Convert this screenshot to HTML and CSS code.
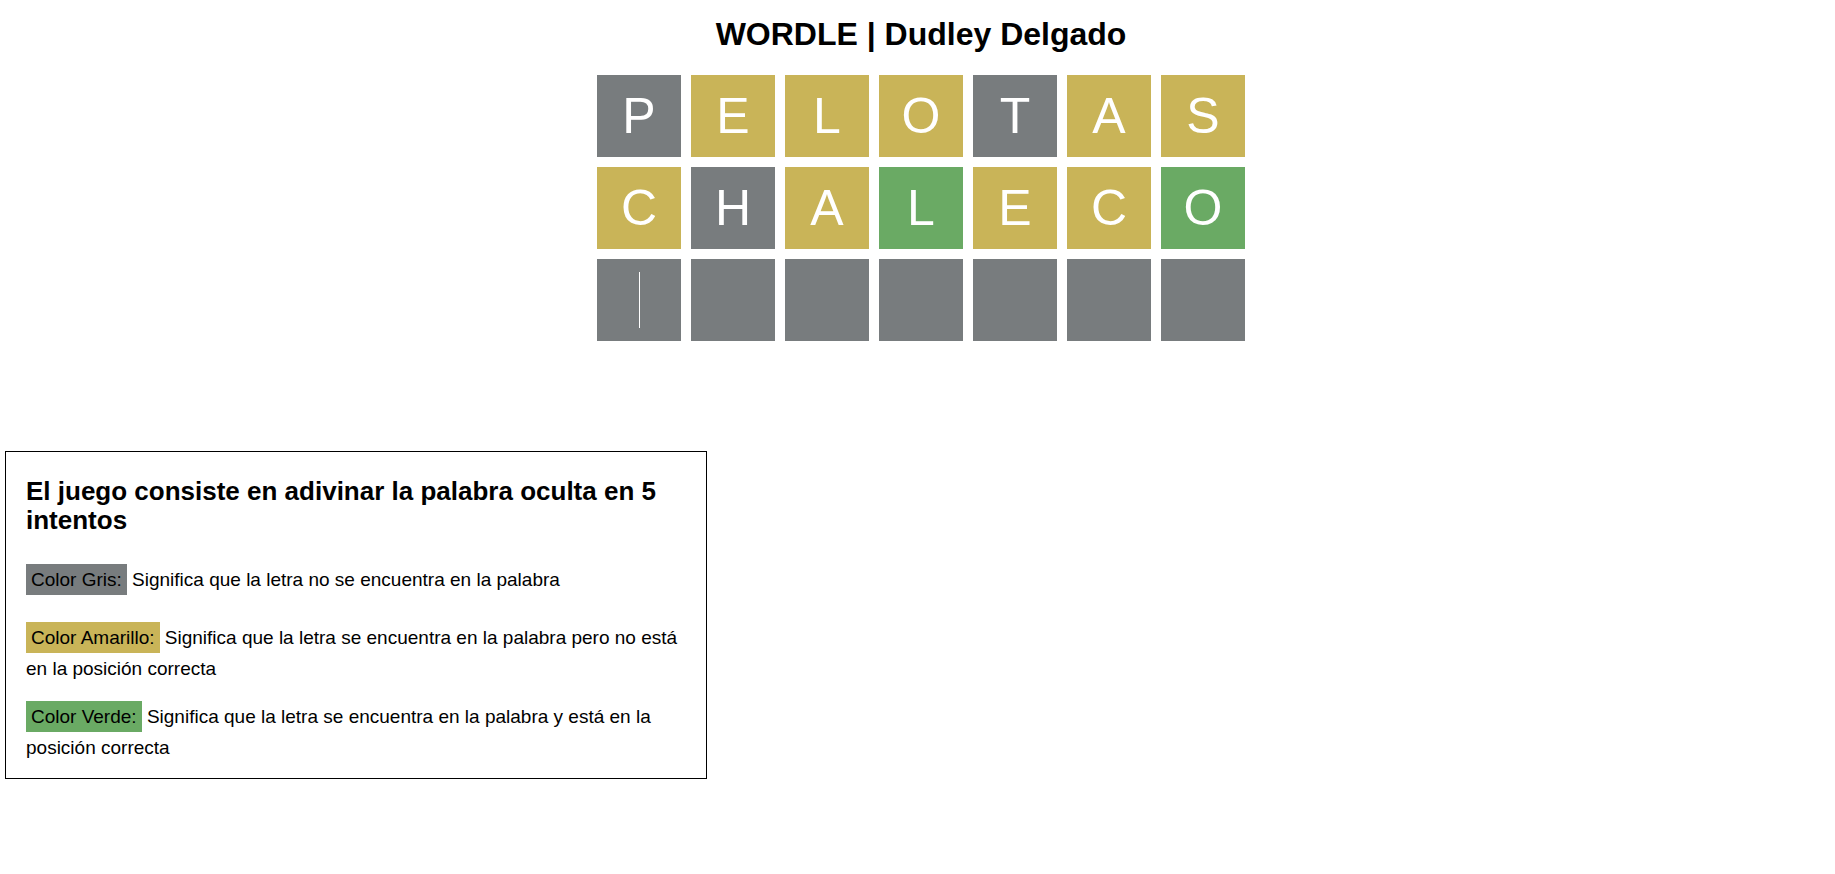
FILE: index.html
```html
<!DOCTYPE html>
<html lang="es">
<head>
<meta charset="utf-8">
<meta name="viewport" content="width=device-width, initial-scale=1">
<title>WORDLE | Dudley Delgado</title>
<link rel="stylesheet" href="styles.css">
</head>
<body>
<main class="game">
  <h1 class="title">WORDLE | Dudley Delgado</h1>
  <form class="board">
    <div class="row">
      <input class="tile" type="text" maxlength="1" aria-label="Intento 1, letra 1" value="P">
      <input class="tile present" type="text" maxlength="1" aria-label="Intento 1, letra 2" value="E">
      <input class="tile present" type="text" maxlength="1" aria-label="Intento 1, letra 3" value="L">
      <input class="tile present" type="text" maxlength="1" aria-label="Intento 1, letra 4" value="O">
      <input class="tile" type="text" maxlength="1" aria-label="Intento 1, letra 5" value="T">
      <input class="tile present" type="text" maxlength="1" aria-label="Intento 1, letra 6" value="A">
      <input class="tile present" type="text" maxlength="1" aria-label="Intento 1, letra 7" value="S">
    </div>
    <div class="row">
      <input class="tile present" type="text" maxlength="1" aria-label="Intento 2, letra 1" value="C">
      <input class="tile" type="text" maxlength="1" aria-label="Intento 2, letra 2" value="H">
      <input class="tile present" type="text" maxlength="1" aria-label="Intento 2, letra 3" value="A">
      <input class="tile correct" type="text" maxlength="1" aria-label="Intento 2, letra 4" value="L">
      <input class="tile present" type="text" maxlength="1" aria-label="Intento 2, letra 5" value="E">
      <input class="tile present" type="text" maxlength="1" aria-label="Intento 2, letra 6" value="C">
      <input class="tile correct" type="text" maxlength="1" aria-label="Intento 2, letra 7" value="O">
    </div>
    <div class="row">
      <input class="tile active" type="text" maxlength="1" aria-label="Intento 3, letra 1">
      <input class="tile" type="text" maxlength="1" aria-label="Intento 3, letra 2">
      <input class="tile" type="text" maxlength="1" aria-label="Intento 3, letra 3">
      <input class="tile" type="text" maxlength="1" aria-label="Intento 3, letra 4">
      <input class="tile" type="text" maxlength="1" aria-label="Intento 3, letra 5">
      <input class="tile" type="text" maxlength="1" aria-label="Intento 3, letra 6">
      <input class="tile" type="text" maxlength="1" aria-label="Intento 3, letra 7">
    </div>
  </form>
</main>
<section class="rules">
  <h2 class="rules-title">El juego consiste en adivinar la palabra oculta en 5 intentos</h2>
  <p class="rule rule-first"><span class="tag">Color Gris:</span> Significa que la letra no se encuentra en la palabra</p>
  <p class="rule"><span class="tag present">Color Amarillo:</span> Significa que la letra se encuentra en la palabra pero no está en la posición correcta</p>
  <p class="rule"><span class="tag correct">Color Verde:</span> Significa que la letra se encuentra en la palabra y está en la posición correcta</p>
</section>
</body>
</html>
```

FILE: styles.css
```css
* {
  box-sizing: border-box;
}

body {
  margin: 0;
  background: #fff;
  color: #000;
  font-family: "Liberation Sans", Arial, sans-serif;
}

.game {
  display: flex;
  flex-direction: column;
  align-items: center;
  gap: 22px;
  padding: 16px 0 0 7px;
}

.title {
  margin: 0;
  font-size: 32px;
  line-height: 37px;
}

.board {
  display: grid;
  gap: 10px;
}

.row {
  display: flex;
  gap: 10px;
}

.tile,
.tag {
  background-color: #787c7e;
}

.present {
  background-color: #c9b458;
}

.correct {
  background-color: #6aaa64;
}

.tile {
  width: 84px;
  height: 82px;
  padding: 0;
  border: 0;
  border-radius: 0;
  outline: 0;
  color: #fff;
  font: 50px "Liberation Sans", Arial, sans-serif;
  text-align: center;
  text-transform: uppercase;
}

/* Insertion mark in the next empty tile */
.active {
  background-image: linear-gradient(#fff, #fff);
  background-position: center;
  background-repeat: no-repeat;
  background-size: 1px 56px;
  caret-color: transparent;
}

.rules {
  max-width: 702px;
  margin: 110px 5px 20px;
  padding: 25px 20px 15px;
  border: 1px solid #000;
}

.rules-title {
  margin: 0 0 29px;
  font-size: 26px;
  line-height: 29px;
}

.rule {
  margin: 0 0 17px;
  font-size: 19px;
  line-height: 31px;
}

.rule-first {
  margin-bottom: 27px;
}

.rule:last-child {
  margin-bottom: 0;
}

.tag {
  padding: 5px;
}
```
